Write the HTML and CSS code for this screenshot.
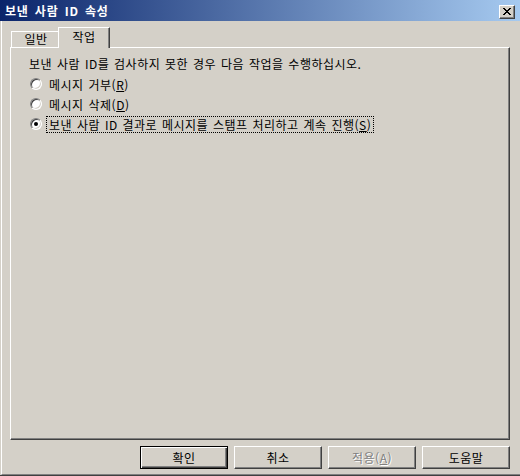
FILE: index.html
```html
<!DOCTYPE html>
<html lang="ko">
<head>
<meta charset="utf-8">
<title>보낸 사람 ID 속성</title>
<link rel="stylesheet" href="styles.css">
</head>
<body>
<div class="window">
  <div class="titlebar">
    <span class="title">보낸 사람 ID 속성</span>
    <button class="close" aria-label="닫기">
      <svg width="8" height="7" viewBox="0 0 8 7" shape-rendering="crispEdges">
        <path d="M0 0h2v1h-2z M6 0h2v1h-2z M1 1h2v1h-2z M5 1h2v1h-2z M2 2h4v1h-4z M3 3h2v1h-2z M2 4h4v1h-4z M1 5h2v1h-2z M5 5h2v1h-2z M0 6h2v1h-2z M6 6h2v1h-2z" fill="#000"/>
      </svg>
    </button>
  </div>
  <div class="client">
    <div class="tabs">
      <div class="tab">일반</div>
      <div class="tab active">작업</div>
    </div>
    <div class="panel">
      <p class="intro">보낸 사람 ID를 검사하지 못한 경우 다음 작업을 수행하십시오.</p>
      <div class="options">
        <div class="option"><span class="radio"></span><span class="label">메시지 거부(<u>R</u>)</span></div>
        <div class="option"><span class="radio"></span><span class="label">메시지 삭제(<u>D</u>)</span></div>
        <div class="option"><span class="radio checked"></span><span class="label focused">보낸 사람 ID 결과로 메시지를 스탬프 처리하고 계속 진행(<u>S</u>)</span></div>
      </div>
    </div>
    <div class="buttons">
      <button class="btn default">확인</button>
      <button class="btn">취소</button>
      <button class="btn disabled">적용(<u>A</u>)</button>
      <button class="btn">도움말</button>
    </div>
  </div>
</div>
</body>
</html>
```
FILE: styles.css
```css
html, body {
  margin: 0;
  padding: 0;
  background: #D4D0C8;
}
body {
  font-family: "Noto Sans CJK KR", "Noto Sans", sans-serif;
  font-size: 12px;
  color: #000;
  letter-spacing: 0.5px;
}
.window {
  width: 520px;
  height: 476px;
  box-sizing: border-box;
  background: #D4D0C8;
  border-bottom: 1px solid #404040;
  display: flex;
  flex-direction: column;
}
.titlebar {
  height: 21px;
  flex: none;
  background: linear-gradient(to right, #0A246A, #A6CAF0);
  display: flex;
  align-items: center;
  justify-content: space-between;
  padding: 0 5px 0 5px;
  box-sizing: border-box;
}
.title {
  color: #fff;
  font-weight: bold;
  font-size: 12px;
  line-height: 14px;
  letter-spacing: 0.8px;
  word-spacing: 2px;
  margin-top: 1px;
}
.close {
  width: 16px;
  height: 14px;
  margin-top: 2px;
  padding: 0;
  box-sizing: border-box;
  background: #D4D0C8;
  border: 1px solid;
  border-color: #fff #404040 #404040 #fff;
  box-shadow: inset -1px -1px #808080;
  display: flex;
  align-items: center;
  justify-content: center;
}
.close svg { display: block; margin-left: -1px; }
.client {
  flex: 1;
  margin-left: 1px;
  border-left: 1px solid #fff;
  border-bottom: 1px solid #808080;
  padding-top: 6px;
  display: flex;
  flex-direction: column;
}
.tabs {
  display: flex;
  align-items: flex-end;
  margin-left: 9px;
  height: 20px;
}
.tab {
  height: 16px;
  width: 47px;
  box-sizing: border-box;
  border-top: 1px solid #fff;
  border-left: 1px solid #fff;
  line-height: 14px;
  text-align: center;
  padding-left: 2px;
}
.tab.active {
  position: relative;
  z-index: 1;
  height: 21px;
  margin-bottom: -1px;
  width: 52px;
  background: #D4D0C8;
  border-right: 1px solid #404040;
  box-shadow: inset -1px 0 #808080;
  line-height: 17px;
  padding-left: 0;
}
.panel {
  margin-left: 8px;
  width: 500px;
  height: 393px;
  box-sizing: border-box;
  border: 1px solid;
  border-color: #fff #404040 #404040 #fff;
  box-shadow: inset -1px -1px #808080;
  padding: 9px 0 0 18px;
}
.intro {
  margin: 0;
  line-height: 14px;
  word-spacing: 1px;
}
.options {
  margin-top: 3px;
  display: flex;
  flex-direction: column;
}
.option {
  height: 20px;
  display: flex;
  align-items: center;
}
.radio {
  width: 12px;
  height: 12px;
  margin-left: 1px;
  box-sizing: border-box;
  border-radius: 50%;
  border: 1px solid;
  border-color: #808080 #fff #fff #808080;
  box-shadow: inset 1px 1px #404040, inset -1px -1px #D4D0C8;
  background: #fff;
  display: flex;
  align-items: center;
  justify-content: center;
  flex: none;
}
.radio.checked::after {
  content: "";
  width: 4px;
  height: 4px;
  border-radius: 50%;
  background: #000;
}
.label {
  margin-left: 4px;
  padding: 0 2px;
  line-height: 15px;
  border: 1px dotted transparent;
  word-spacing: 1px;
}
.label.focused {
  border-color: #000;
}
.buttons {
  display: flex;
  justify-content: flex-end;
  gap: 6px;
  padding-right: 10px;
  margin-top: 6px;
}
.btn {
  width: 88px;
  height: 23px;
  box-sizing: border-box;
  font: inherit;
  letter-spacing: 0.5px;
  color: #000;
  background: #D4D0C8;
  border: 1px solid;
  border-color: #fff #404040 #404040 #fff;
  box-shadow: inset -1px -1px #808080;
  padding: 0;
  line-height: 19px;
}
.btn.default {
  border: 1px solid #000;
  box-shadow: inset 1px 1px #fff, inset -1px -1px #404040, inset -2px -2px #808080;
}
.btn.disabled {
  color: #808080;
  text-shadow: 1px 1px #fff;
}
u { text-decoration: underline; text-underline-offset: 1px; }
```
